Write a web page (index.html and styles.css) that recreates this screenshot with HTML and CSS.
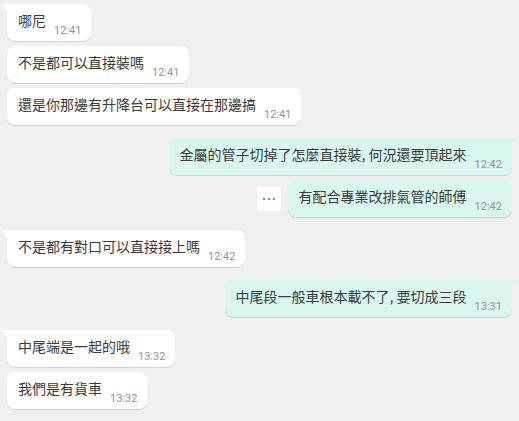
FILE: index.html
```html
<!DOCTYPE html>
<html lang="zh-Hant">
<head>
<meta charset="utf-8">
<link rel="stylesheet" href="styles.css">
</head>
<body>
<div class="chat">
  <div class="group">
    <div class="row in"><div class="bubble in first"><span class="text">哪尼</span><span class="time">12:41</span></div></div>
    <div class="row in"><div class="bubble in"><span class="text">不是都可以直接裝嗎</span><span class="time">12:41</span></div></div>
    <div class="row in"><div class="bubble in"><span class="text">還是你那邊有升降台可以直接在那邊搞</span><span class="time">12:41</span></div></div>
  </div>
  <div class="group">
    <div class="row out"><div class="bubble out first"><span class="text">金屬的管子切掉了怎麼直接裝, 何況還要頂起來</span><span class="time">12:42</span></div></div>
    <div class="row out">
      <div class="more"><svg width="14" height="4" viewBox="0 0 14 4"><circle cx="2" cy="2" r="1.3" fill="#8f8f8f"/><circle cx="7" cy="2" r="1.3" fill="#8f8f8f"/><circle cx="12" cy="2" r="1.3" fill="#8f8f8f"/></svg></div>
      <div class="bubble out"><span class="text">有配合專業改排氣管的師傅</span><span class="time">12:42</span></div>
    </div>
  </div>
  <div class="group">
    <div class="row in"><div class="bubble in first"><span class="text">不是都有對口可以直接接上嗎</span><span class="time">12:42</span></div></div>
  </div>
  <div class="group">
    <div class="row out"><div class="bubble out first"><span class="text">中尾段一般車根本載不了, 要切成三段</span><span class="time">13:31</span></div></div>
  </div>
  <div class="group">
    <div class="row in"><div class="bubble in first"><span class="text">中尾端是一起的哦</span><span class="time">13:32</span></div></div>
    <div class="row in"><div class="bubble in"><span class="text">我們是有貨車</span><span class="time">13:32</span></div></div>
  </div>
</div>
</body>
</html>
```

FILE: styles.css
```css
html, body {
  margin: 0;
  padding: 0;
  background: #f0f0f0;
}
body {
  font-family: "Noto Sans CJK TC", "Noto Sans", sans-serif;
  color: #3a3a3a;
}
.chat {
  display: flex;
  flex-direction: column;
  gap: 13px;
  padding: 4px 7px;
}
.group {
  display: flex;
  flex-direction: column;
  gap: 5px;
}
.row {
  display: flex;
  align-items: center;
}
.row.in { justify-content: flex-start; }
.row.out { justify-content: flex-end; gap: 7px; }
.bubble {
  position: relative;
  display: flex;
  align-items: flex-end;
  padding: 6px 10px 3px 11px;
  border-radius: 8px;
  box-shadow: 0 1px 0.5px rgba(0, 0, 0, 0.12);
}
.bubble.in { background: #ffffff; }
.bubble.out { background: #d9f7ee; }
.bubble.in.first { border-top-left-radius: 0; }
.bubble.out.first { border-top-right-radius: 0; }
.bubble.first::before {
  content: "";
  position: absolute;
  top: 0;
  width: 6px;
  height: 8px;
}
.bubble.in.first::before {
  left: -6px;
  background: #ffffff;
  clip-path: polygon(0 0, 100% 0, 100% 100%);
}
.bubble.out.first::before {
  right: -6px;
  background: #d9f7ee;
  clip-path: polygon(0 0, 100% 0, 0 100%);
}
.text {
  font-size: 14px;
  line-height: 20px;
  margin-bottom: 8px;
  white-space: nowrap;
}
.time {
  font-family: Roboto, "Liberation Sans", sans-serif;
  font-size: 11px;
  line-height: 15px;
  color: #939393;
  margin-left: 8px;
  white-space: nowrap;
}
.more {
  width: 24px;
  height: 24px;
  border-radius: 3px;
  background: #ffffff;
  display: flex;
  align-items: center;
  justify-content: center;
}
```
